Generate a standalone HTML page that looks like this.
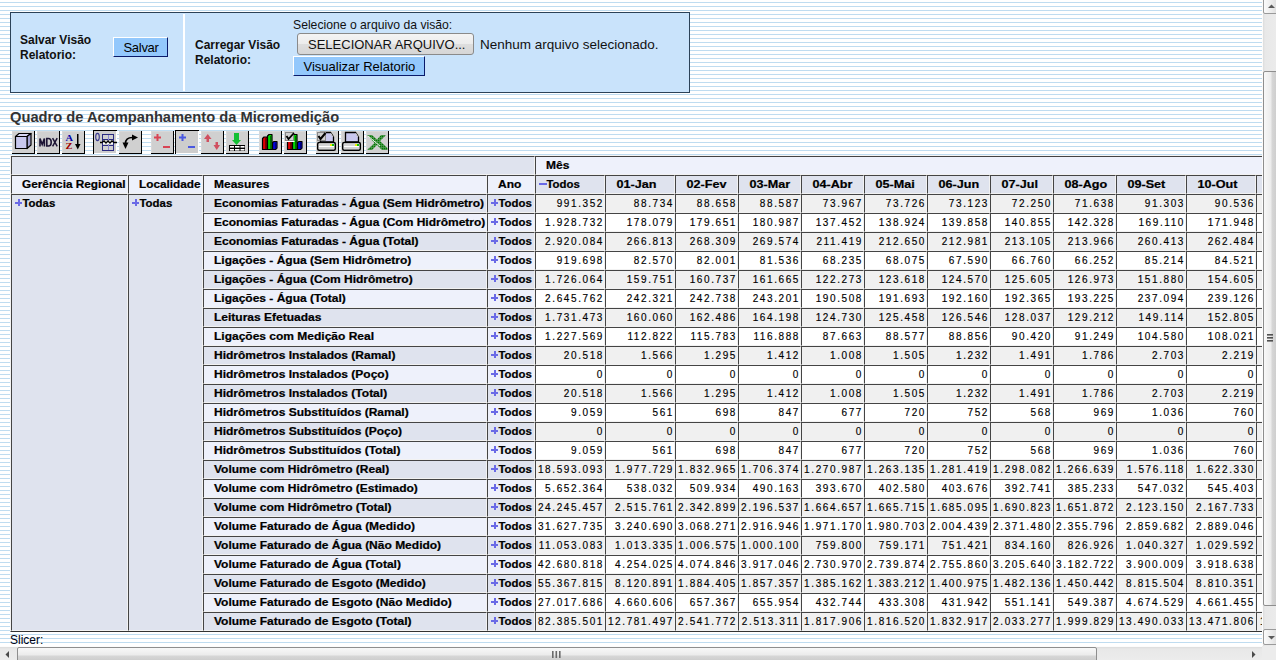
<!DOCTYPE html>
<html><head><meta charset="utf-8"><style>
html,body{margin:0;padding:0;}
body{width:1276px;height:660px;overflow:hidden;position:relative;font-family:"Liberation Sans",sans-serif;
background:#fff;}
#vp{position:absolute;left:0;top:0;width:1262px;height:646px;overflow:hidden;
background:repeating-linear-gradient(to bottom,#fff 0,#fff 2px,#bfdcf0 2px,#bfdcf0 3px,#fff 3px,#fff 4px);}
.c{position:absolute;border-top:1px solid #444;border-left:1px solid #444;border-right:1px solid #f2f2f2;border-bottom:1px solid #f2f2f2;overflow:hidden;white-space:nowrap;}
.c .t{position:absolute;left:10px;top:2px;font-size:10px;line-height:14px;color:#000;transform:scaleX(1.2);transform-origin:0 0;-webkit-text-stroke:0.2px #000;}
.c .n{position:absolute;right:0px;top:2px;font-size:10px;line-height:14px;letter-spacing:1.6px;color:#000;-webkit-text-stroke:0.15px #000;}
.c .s{transform:translateX(0.5px) scaleX(1.14);}
.c .g{transform:scaleX(1.18);}
.c .m{transform:translateX(0.5px) scaleX(1.26);}
.pl{position:absolute;left:3px;top:4px;width:7px;height:7px;}
.pl:before{content:"";position:absolute;left:0;top:2.5px;width:7px;height:2px;background:#6a6ae6;}
.pl:after{content:"";position:absolute;left:2.5px;top:0;width:2px;height:7px;background:#6a6ae6;}
.mi{position:absolute;left:3px;top:6.5px;width:8px;height:2px;background:#6a6ae6;}
#tbl{position:absolute;left:10px;top:155px;width:1300px;height:477px;border-top:1px solid #f4f4f4;border-left:1px solid #f4f4f4;border-bottom:1px solid #333;box-sizing:border-box;}
#panel{position:absolute;left:10px;top:12px;width:678px;height:79px;border:1px solid #2c4258;background:#c9e3fb;}
.lbl{position:absolute;font-size:12px;font-weight:bold;line-height:15px;color:#111;}
.btn{position:absolute;background:#93c8fc;border-top:1px solid #fff;border-left:1px solid #fff;border-right:1px solid #0a1a6a;border-bottom:1px solid #0a1a6a;font-size:13px;color:#000;}
#title{position:absolute;left:10px;top:107px;font-size:14.7px;font-weight:bold;color:#333;line-height:20px;white-space:nowrap;}
.tb{position:absolute;top:131px;width:22px;height:22px;background:#d4d4d4;border-right:1px solid #000;border-bottom:1px solid #000;}
.tbp{position:absolute;top:130px;width:23px;height:23px;background:#d0d0d0;border-left:1px solid #000;border-top:1px solid #000;border-right:1px solid #fff;border-bottom:1px solid #fff;}
#slicer{position:absolute;left:10px;top:633px;font-size:12px;line-height:14px;color:#001;}
#vsb{position:absolute;left:1262px;top:0;width:17px;height:646px;background:linear-gradient(to right,#fcfcfc 0,#fcfcfc 1px,#dcdcdc 1px,#e8e8e8 3px,#ececec);overflow:hidden;}
#vup{position:absolute;left:1px;top:-2px;width:15px;height:14px;border:1px solid #9a9a9a;border-radius:2px;background:linear-gradient(to right,#fbfbfb,#ececec 50%,#d8d8d8);}
#vdown{position:absolute;left:1px;top:629px;width:15px;height:14px;border:1px solid #9a9a9a;border-radius:2px;background:linear-gradient(to right,#fbfbfb,#ececec 50%,#d8d8d8);}
#vthumb{position:absolute;left:1px;top:71px;width:15px;height:533px;border:1px solid #8e8e8e;border-radius:2px;background:linear-gradient(to right,#f8f8f8,#ececec 45%,#d6d6d6 55%,#c8c8c8);}
#hsb{position:absolute;left:0;top:646px;width:1262px;height:14px;background:linear-gradient(to bottom,#fcfcfc 0,#fcfcfc 1px,#dcdcdc 1px,#e8e8e8 3px,#ececec);overflow:hidden;}
#hthumb{position:absolute;left:17px;top:1px;width:1078px;height:15px;border:1px solid #8e8e8e;border-radius:2px;background:linear-gradient(to bottom,#f8f8f8,#ececec 45%,#d6d6d6 55%,#c8c8c8);}
#corner{position:absolute;left:1262px;top:646px;width:14px;height:14px;background:#ececec;}
</style></head><body>
<div id="vp">
<div id="panel"></div>
<div style="position:absolute;left:183px;top:14px;width:2px;height:77px;background:#fff"></div>
<div class="lbl" style="left:20px;top:33px">Salvar Visão<br>Relatorio:</div>
<div class="btn" style="left:113px;top:37px;width:53px;height:18px;"><span style="position:absolute;left:9.5px;top:1.5px;line-height:16px;letter-spacing:-0.3px">Salvar</span></div>
<div class="lbl" style="left:195px;top:38px">Carregar Visão<br>Relatorio:</div>
<div style="position:absolute;left:293px;top:18px;font-size:12.2px;line-height:15px;color:#111;white-space:nowrap">Selecione o arquivo da visão:</div>
<div id="fbtn" style="position:absolute;left:297px;top:33px;width:175px;height:20px;border:1px solid #8a8a8a;border-radius:3px;background:linear-gradient(#f4f4f4 0%,#ececec 50%,#dedede 51%,#d6d6d6 100%);font-size:13px;color:#111;white-space:nowrap"><span style="position:absolute;left:10px;top:3px;line-height:16px">SELECIONAR ARQUIVO...</span></div>
<div style="position:absolute;left:480px;top:37px;font-size:13.5px;line-height:16px;color:#111;white-space:nowrap">Nenhum arquivo selecionado.</div>
<div class="btn" style="left:293px;top:56px;width:130px;height:18px;white-space:nowrap"><span style="position:absolute;left:9.5px;top:2px;line-height:16px">Visualizar Relatorio</span></div>
<div id="title">Quadro de Acompanhamento da Micromedição</div>
<div id="tbl"></div>
<svg style="position:absolute;left:0;top:0" width="400" height="160"><rect x="12" y="131" width="22" height="22" fill="#d0d0d0"/><rect x="12" y="131" width="22" height="1" fill="#d8d8d8"/><rect x="12" y="131" width="1" height="22" fill="#d8d8d8"/><rect x="34" y="131" width="1" height="23" fill="#000"/><rect x="12" y="153" width="23" height="1" fill="#000"/><rect x="37" y="131" width="22" height="22" fill="#d0d0d0"/><rect x="37" y="131" width="22" height="1" fill="#d8d8d8"/><rect x="37" y="131" width="1" height="22" fill="#d8d8d8"/><rect x="59" y="131" width="1" height="23" fill="#000"/><rect x="37" y="153" width="23" height="1" fill="#000"/><rect x="62" y="131" width="22" height="22" fill="#d0d0d0"/><rect x="62" y="131" width="22" height="1" fill="#d8d8d8"/><rect x="62" y="131" width="1" height="22" fill="#d8d8d8"/><rect x="84" y="131" width="1" height="23" fill="#000"/><rect x="62" y="153" width="23" height="1" fill="#000"/><rect x="119" y="131" width="22" height="22" fill="#d0d0d0"/><rect x="119" y="131" width="22" height="1" fill="#d8d8d8"/><rect x="119" y="131" width="1" height="22" fill="#d8d8d8"/><rect x="141" y="131" width="1" height="23" fill="#000"/><rect x="119" y="153" width="23" height="1" fill="#000"/><rect x="151" y="131" width="22" height="22" fill="#d0d0d0"/><rect x="151" y="131" width="22" height="1" fill="#d8d8d8"/><rect x="151" y="131" width="1" height="22" fill="#d8d8d8"/><rect x="173" y="131" width="1" height="23" fill="#000"/><rect x="151" y="153" width="23" height="1" fill="#000"/><rect x="201" y="131" width="22" height="22" fill="#d0d0d0"/><rect x="201" y="131" width="22" height="1" fill="#d8d8d8"/><rect x="201" y="131" width="1" height="22" fill="#d8d8d8"/><rect x="223" y="131" width="1" height="23" fill="#000"/><rect x="201" y="153" width="23" height="1" fill="#000"/><rect x="226" y="131" width="22" height="22" fill="#d0d0d0"/><rect x="226" y="131" width="22" height="1" fill="#d8d8d8"/><rect x="226" y="131" width="1" height="22" fill="#d8d8d8"/><rect x="248" y="131" width="1" height="23" fill="#000"/><rect x="226" y="153" width="23" height="1" fill="#000"/><rect x="259" y="131" width="22" height="22" fill="#d0d0d0"/><rect x="259" y="131" width="22" height="1" fill="#d8d8d8"/><rect x="259" y="131" width="1" height="22" fill="#d8d8d8"/><rect x="281" y="131" width="1" height="23" fill="#000"/><rect x="259" y="153" width="23" height="1" fill="#000"/><rect x="284" y="131" width="22" height="22" fill="#d0d0d0"/><rect x="284" y="131" width="22" height="1" fill="#d8d8d8"/><rect x="284" y="131" width="1" height="22" fill="#d8d8d8"/><rect x="306" y="131" width="1" height="23" fill="#000"/><rect x="284" y="153" width="23" height="1" fill="#000"/><rect x="316" y="131" width="22" height="22" fill="#d0d0d0"/><rect x="316" y="131" width="22" height="1" fill="#d8d8d8"/><rect x="316" y="131" width="1" height="22" fill="#d8d8d8"/><rect x="338" y="131" width="1" height="23" fill="#000"/><rect x="316" y="153" width="23" height="1" fill="#000"/><rect x="341" y="131" width="22" height="22" fill="#d0d0d0"/><rect x="341" y="131" width="22" height="1" fill="#d8d8d8"/><rect x="341" y="131" width="1" height="22" fill="#d8d8d8"/><rect x="363" y="131" width="1" height="23" fill="#000"/><rect x="341" y="153" width="23" height="1" fill="#000"/><rect x="366" y="131" width="22" height="22" fill="#d0d0d0"/><rect x="366" y="131" width="22" height="1" fill="#d8d8d8"/><rect x="366" y="131" width="1" height="22" fill="#d8d8d8"/><rect x="388" y="131" width="1" height="23" fill="#000"/><rect x="366" y="153" width="23" height="1" fill="#000"/><rect x="93" y="130" width="24" height="24" fill="#fff"/><rect x="94" y="131" width="22" height="22" fill="#cdcdcd"/><rect x="93" y="130" width="24" height="1" fill="#000"/><rect x="93" y="130" width="1" height="24" fill="#000"/><rect x="175" y="130" width="24" height="24" fill="#fff"/><rect x="176" y="131" width="22" height="22" fill="#cdcdcd"/><rect x="175" y="130" width="24" height="1" fill="#000"/><rect x="175" y="130" width="1" height="24" fill="#000"/><g stroke="#000" stroke-width="1.2" stroke-linejoin="round"><polygon points="15.5,136.5 19,133.5 31,133.5 27,136.5" fill="#d8d8f4"/><polygon points="27,136.5 31,133.5 31,145 27,148.5" fill="#a4a4d4"/><rect x="15.5" y="136.5" width="11.5" height="12" fill="#c8c8ee"/></g><g fill="none" stroke="#1c1434" stroke-width="1.6"><path d="M40,146.5 L40,138.5 L42.2,144.5 L44.4,138.5 L44.4,146.5"/><path d="M46.8,138.5 L46.8,146 L48.4,146 Q51.2,146 51.2,142.25 Q51.2,138.5 48.4,138.5 Z"/><path d="M52.6,138.2 L57.2,146.3 M57.2,138.2 L52.6,146.3" stroke-width="1.5"/></g><text x="65.5" y="141" font-family="Liberation Serif" font-weight="bold" font-size="9" fill="#0000a8" textLength="7.5" lengthAdjust="spacingAndGlyphs">A</text><text x="65.5" y="149" font-family="Liberation Serif" font-weight="bold" font-size="9" fill="#a00000" textLength="7" lengthAdjust="spacingAndGlyphs">Z</text><rect x="77" y="134" width="1.5" height="11" fill="#000"/><polygon points="75,144 80.5,144 77.75,149.5" fill="#000"/><ellipse cx="97.5" cy="137" rx="1.8" ry="3.6" fill="none" stroke="#3a3a90" stroke-width="1.1"/><rect x="102.5" y="134.5" width="11" height="16" fill="#d0d0d0" stroke="#2a2a80" stroke-width="1"/><rect x="103" y="139" width="10" height="1" fill="#2a2a80"/><rect x="103" y="145" width="10" height="1" fill="#2a2a80"/><rect x="108" y="135" width="1" height="15" fill="#8a8ad0"/><rect x="103" y="141" width="10" height="3" fill="#fff"/><polyline points="100,142.5 102,142.5 104,141 106,143 108,141 110,143 112,141 114,142.5 117,142.5" fill="none" stroke="#000" stroke-width="1.4"/><path d="M125.5,145 L125.5,143.5 Q125.5,137.5 132.5,137.5" fill="none" stroke="#000" stroke-width="1.6"/><polygon points="122.5,142.5 128.5,142.5 125.5,149" fill="#000"/><polygon points="132,134.5 132,140.5 138,137.5" fill="#000"/><rect x="154.0" y="136.5" width="7" height="2" fill="#d84454"/><rect x="156.5" y="134" width="2" height="7" fill="#d84454"/><rect x="163.0" y="146" width="7" height="2" fill="#d84454"/><rect x="179.0" y="136.5" width="7" height="2" fill="#4a58e0"/><rect x="181.5" y="134" width="2" height="7" fill="#4a58e0"/><rect x="188.0" y="146" width="7" height="2" fill="#4a58e0"/><g fill="#d05060"><rect x="206.5" y="137" width="2.5" height="5"/><polygon points="204,139 211.5,139 207.75,134"/><rect x="215.5" y="142" width="2.5" height="4.5"/><polygon points="213.5,145 220,145 216.75,150"/></g><g fill="#14c034"><rect x="234" y="133" width="5" height="7.5"/><polygon points="232,140 241,140 236.5,145"/></g><rect x="229" y="145" width="16" height="6" fill="#000"/><rect x="230" y="146" width="4" height="1.6" fill="#fff"/><rect x="235" y="146" width="4.5" height="1.6" fill="#fff"/><rect x="240.5" y="146" width="4" height="1.6" fill="#fff"/><rect x="230" y="149" width="4" height="1.6" fill="#fff"/><rect x="235" y="149" width="4.5" height="1.6" fill="#fff"/><rect x="240.5" y="149" width="4" height="1.6" fill="#fff"/><g stroke="#000" stroke-width="1.2" stroke-linejoin="round"><path d="M262.5,138.5 L264,137 L267,137 L267,149.5 L262.5,149.5Z" fill="#e00000"/><path d="M267.5,136 L269,134.5 L272,134.5 L272,149.5 L267.5,149.5Z" fill="#00d800"/><path d="M272.5,142.5 L274,141.5 L277,141.5 L277,148 L275.5,149.5 L272.5,149.5Z" fill="#0000d8"/></g><rect x="265" y="138" width="1.5" height="11" fill="#800000"/><rect x="270" y="136" width="1.5" height="13" fill="#007000"/><rect x="275" y="142.5" width="1.5" height="6" fill="#000080"/><g stroke="#000" stroke-width="1.2" stroke-linejoin="round"><path d="M287.5,138.5 L289,137 L292,137 L292,149.5 L287.5,149.5Z" fill="#e00000"/><path d="M292.5,136 L294,134.5 L297,134.5 L297,149.5 L292.5,149.5Z" fill="#00d800"/><path d="M297.5,142.5 L299,141.5 L302,141.5 L302,148 L300.5,149.5 L297.5,149.5Z" fill="#0000d8"/></g><rect x="290" y="138" width="1.5" height="11" fill="#800000"/><rect x="295" y="136" width="1.5" height="13" fill="#007000"/><rect x="300" y="142.5" width="1.5" height="6" fill="#000080"/><rect x="285" y="132" width="9" height="9" fill="#888"/><rect x="286" y="133" width="7" height="7" fill="#d0d0d0"/><rect x="284.5" y="141" width="10" height="1" fill="#fff"/><polyline points="286.5,136 288.5,139 294,133" fill="none" stroke="#000" stroke-width="1.8"/><path d="M320.5,132.5 L330.5,132.5 L333.5,137 L333.5,142 L320.5,142Z" fill="#c8c8ee" stroke="#000" stroke-width="1.3"/><line x1="330.5" y1="133" x2="333" y2="137" stroke="#fff" stroke-width="0.8"/><rect x="317.7" y="142.5" width="17.6" height="7.8" rx="1.5" fill="#fff" stroke="#000" stroke-width="1.5"/><rect x="319" y="144.5" width="11" height="1" fill="#a8a8a8"/><rect x="319" y="147.5" width="15" height="1" fill="#a8a8a8"/><rect x="330" y="144" width="2" height="2" fill="#f0f000"/><rect x="332" y="144" width="2" height="2" fill="#10c010"/><rect x="317" y="132" width="9" height="9" fill="#8a8a8a"/><rect x="318" y="133" width="7" height="7" fill="#d0d0d0"/><polyline points="318.5,136 320.5,139 325.5,133" fill="none" stroke="#000" stroke-width="2"/><path d="M345.5,132.5 L355.5,132.5 L358.5,137 L358.5,142 L345.5,142Z" fill="#c8c8ee" stroke="#000" stroke-width="1.3"/><line x1="355.5" y1="133" x2="358" y2="137" stroke="#fff" stroke-width="0.8"/><rect x="342.7" y="142.5" width="17.6" height="7.8" rx="1.5" fill="#fff" stroke="#000" stroke-width="1.5"/><rect x="344" y="144.5" width="11" height="1" fill="#a8a8a8"/><rect x="344" y="147.5" width="15" height="1" fill="#a8a8a8"/><rect x="355" y="144" width="2" height="2" fill="#f0f000"/><rect x="357" y="144" width="2" height="2" fill="#10c010"/><defs><pattern id="dots" width="2" height="2" patternUnits="userSpaceOnUse"><rect width="2" height="2" fill="#5a9a5a"/><rect x="0" y="0" width="1.3" height="1.3" fill="#007a00"/></pattern></defs><path d="M367,135 L372,135 L377,139.5 L381,135 L386,135 L380,141 L387.5,148 L387.5,150 L382,150 L377,145 L372,150 L367,150 L374.5,143 Z" fill="url(#dots)"/><line x1="368" y1="136" x2="380" y2="146" stroke="#fff" stroke-width="0.9"/></svg>
<div class="c " style="left:11px;top:156px;width:522px;height:17px;background:#dfe3ee"></div>
<div class="c h" style="left:535px;top:156px;width:863px;height:17px;background:#eef1fb"><b class="t">Mês</b></div>
<div class="c h" style="left:11px;top:175px;width:115px;height:17px;background:#eef1fb"><b class="t g">Gerência Regional</b></div>
<div class="c h" style="left:128px;top:175px;width:73px;height:17px;background:#eef1fb"><b class="t g">Localidade</b></div>
<div class="c h" style="left:203px;top:175px;width:282px;height:17px;background:#eef1fb"><b class="t">Measures</b></div>
<div class="c h" style="left:487px;top:175px;width:46px;height:17px;background:#eef1fb"><b class="t">Ano</b></div>
<div class="c h" style="left:535px;top:175px;width:68px;height:17px;background:#dfe3ee"><i class="mi"></i><b class="t s">Todos</b></div>
<div class="c h" style="left:605px;top:175px;width:68px;height:17px;background:#dfe3ee"><b class="t m">01-Jan</b></div>
<div class="c h" style="left:675px;top:175px;width:61px;height:17px;background:#dfe3ee"><b class="t m">02-Fev</b></div>
<div class="c h" style="left:738px;top:175px;width:61px;height:17px;background:#dfe3ee"><b class="t m">03-Mar</b></div>
<div class="c h" style="left:801px;top:175px;width:61px;height:17px;background:#dfe3ee"><b class="t m">04-Abr</b></div>
<div class="c h" style="left:864px;top:175px;width:61px;height:17px;background:#dfe3ee"><b class="t m">05-Mai</b></div>
<div class="c h" style="left:927px;top:175px;width:61px;height:17px;background:#dfe3ee"><b class="t m">06-Jun</b></div>
<div class="c h" style="left:990px;top:175px;width:61px;height:17px;background:#dfe3ee"><b class="t m">07-Jul</b></div>
<div class="c h" style="left:1053px;top:175px;width:61px;height:17px;background:#dfe3ee"><b class="t m">08-Ago</b></div>
<div class="c h" style="left:1116px;top:175px;width:68px;height:17px;background:#dfe3ee"><b class="t m">09-Set</b></div>
<div class="c h" style="left:1186px;top:175px;width:68px;height:17px;background:#dfe3ee"><b class="t m">10-Out</b></div>
<div class="c h" style="left:1256px;top:175px;width:68px;height:17px;background:#dfe3ee"><b class="t m">11-Nov</b></div>
<div class="c h" style="left:11px;top:194px;width:115px;height:435px;background:#dfe3ee"><i class="pl"></i><b class="t s">Todas</b></div>
<div class="c h" style="left:128px;top:194px;width:73px;height:435px;background:#dfe3ee"><i class="pl"></i><b class="t s">Todas</b></div>
<div class="c h" style="left:203px;top:194px;width:282px;height:17px;background:#dfe3ee"><b class="t">Economias Faturadas - Água (Sem Hidrômetro)</b></div>
<div class="c h" style="left:487px;top:194px;width:46px;height:17px;background:#dfe3ee"><i class="pl"></i><b class="t s">Todos</b></div>
<div class="c d" style="left:535px;top:194px;width:68px;height:17px;background:#f0f0f0"><span class="n">991.352</span></div>
<div class="c d" style="left:605px;top:194px;width:68px;height:17px;background:#f0f0f0"><span class="n">88.734</span></div>
<div class="c d" style="left:675px;top:194px;width:61px;height:17px;background:#f0f0f0"><span class="n">88.658</span></div>
<div class="c d" style="left:738px;top:194px;width:61px;height:17px;background:#f0f0f0"><span class="n">88.587</span></div>
<div class="c d" style="left:801px;top:194px;width:61px;height:17px;background:#f0f0f0"><span class="n">73.967</span></div>
<div class="c d" style="left:864px;top:194px;width:61px;height:17px;background:#f0f0f0"><span class="n">73.726</span></div>
<div class="c d" style="left:927px;top:194px;width:61px;height:17px;background:#f0f0f0"><span class="n">73.123</span></div>
<div class="c d" style="left:990px;top:194px;width:61px;height:17px;background:#f0f0f0"><span class="n">72.250</span></div>
<div class="c d" style="left:1053px;top:194px;width:61px;height:17px;background:#f0f0f0"><span class="n">71.638</span></div>
<div class="c d" style="left:1116px;top:194px;width:68px;height:17px;background:#f0f0f0"><span class="n">91.303</span></div>
<div class="c d" style="left:1186px;top:194px;width:68px;height:17px;background:#f0f0f0"><span class="n">90.536</span></div>
<div class="c d" style="left:1256px;top:194px;width:68px;height:17px;background:#f0f0f0"><span class="n" style="right:-1px">90.536</span></div>
<div class="c h" style="left:203px;top:213px;width:282px;height:17px;background:#eef1fb"><b class="t">Economias Faturadas - Água (Com Hidrômetro)</b></div>
<div class="c h" style="left:487px;top:213px;width:46px;height:17px;background:#eef1fb"><i class="pl"></i><b class="t s">Todos</b></div>
<div class="c d" style="left:535px;top:213px;width:68px;height:17px;background:#ffffff"><span class="n">1.928.732</span></div>
<div class="c d" style="left:605px;top:213px;width:68px;height:17px;background:#ffffff"><span class="n">178.079</span></div>
<div class="c d" style="left:675px;top:213px;width:61px;height:17px;background:#ffffff"><span class="n">179.651</span></div>
<div class="c d" style="left:738px;top:213px;width:61px;height:17px;background:#ffffff"><span class="n">180.987</span></div>
<div class="c d" style="left:801px;top:213px;width:61px;height:17px;background:#ffffff"><span class="n">137.452</span></div>
<div class="c d" style="left:864px;top:213px;width:61px;height:17px;background:#ffffff"><span class="n">138.924</span></div>
<div class="c d" style="left:927px;top:213px;width:61px;height:17px;background:#ffffff"><span class="n">139.858</span></div>
<div class="c d" style="left:990px;top:213px;width:61px;height:17px;background:#ffffff"><span class="n">140.855</span></div>
<div class="c d" style="left:1053px;top:213px;width:61px;height:17px;background:#ffffff"><span class="n">142.328</span></div>
<div class="c d" style="left:1116px;top:213px;width:68px;height:17px;background:#ffffff"><span class="n">169.110</span></div>
<div class="c d" style="left:1186px;top:213px;width:68px;height:17px;background:#ffffff"><span class="n">171.948</span></div>
<div class="c d" style="left:1256px;top:213px;width:68px;height:17px;background:#ffffff"><span class="n" style="right:-1px">171.948</span></div>
<div class="c h" style="left:203px;top:232px;width:282px;height:17px;background:#dfe3ee"><b class="t">Economias Faturadas - Água (Total)</b></div>
<div class="c h" style="left:487px;top:232px;width:46px;height:17px;background:#dfe3ee"><i class="pl"></i><b class="t s">Todos</b></div>
<div class="c d" style="left:535px;top:232px;width:68px;height:17px;background:#f0f0f0"><span class="n">2.920.084</span></div>
<div class="c d" style="left:605px;top:232px;width:68px;height:17px;background:#f0f0f0"><span class="n">266.813</span></div>
<div class="c d" style="left:675px;top:232px;width:61px;height:17px;background:#f0f0f0"><span class="n">268.309</span></div>
<div class="c d" style="left:738px;top:232px;width:61px;height:17px;background:#f0f0f0"><span class="n">269.574</span></div>
<div class="c d" style="left:801px;top:232px;width:61px;height:17px;background:#f0f0f0"><span class="n">211.419</span></div>
<div class="c d" style="left:864px;top:232px;width:61px;height:17px;background:#f0f0f0"><span class="n">212.650</span></div>
<div class="c d" style="left:927px;top:232px;width:61px;height:17px;background:#f0f0f0"><span class="n">212.981</span></div>
<div class="c d" style="left:990px;top:232px;width:61px;height:17px;background:#f0f0f0"><span class="n">213.105</span></div>
<div class="c d" style="left:1053px;top:232px;width:61px;height:17px;background:#f0f0f0"><span class="n">213.966</span></div>
<div class="c d" style="left:1116px;top:232px;width:68px;height:17px;background:#f0f0f0"><span class="n">260.413</span></div>
<div class="c d" style="left:1186px;top:232px;width:68px;height:17px;background:#f0f0f0"><span class="n">262.484</span></div>
<div class="c d" style="left:1256px;top:232px;width:68px;height:17px;background:#f0f0f0"><span class="n" style="right:-1px">262.484</span></div>
<div class="c h" style="left:203px;top:251px;width:282px;height:17px;background:#eef1fb"><b class="t">Ligações - Água (Sem Hidrômetro)</b></div>
<div class="c h" style="left:487px;top:251px;width:46px;height:17px;background:#eef1fb"><i class="pl"></i><b class="t s">Todos</b></div>
<div class="c d" style="left:535px;top:251px;width:68px;height:17px;background:#ffffff"><span class="n">919.698</span></div>
<div class="c d" style="left:605px;top:251px;width:68px;height:17px;background:#ffffff"><span class="n">82.570</span></div>
<div class="c d" style="left:675px;top:251px;width:61px;height:17px;background:#ffffff"><span class="n">82.001</span></div>
<div class="c d" style="left:738px;top:251px;width:61px;height:17px;background:#ffffff"><span class="n">81.536</span></div>
<div class="c d" style="left:801px;top:251px;width:61px;height:17px;background:#ffffff"><span class="n">68.235</span></div>
<div class="c d" style="left:864px;top:251px;width:61px;height:17px;background:#ffffff"><span class="n">68.075</span></div>
<div class="c d" style="left:927px;top:251px;width:61px;height:17px;background:#ffffff"><span class="n">67.590</span></div>
<div class="c d" style="left:990px;top:251px;width:61px;height:17px;background:#ffffff"><span class="n">66.760</span></div>
<div class="c d" style="left:1053px;top:251px;width:61px;height:17px;background:#ffffff"><span class="n">66.252</span></div>
<div class="c d" style="left:1116px;top:251px;width:68px;height:17px;background:#ffffff"><span class="n">85.214</span></div>
<div class="c d" style="left:1186px;top:251px;width:68px;height:17px;background:#ffffff"><span class="n">84.521</span></div>
<div class="c d" style="left:1256px;top:251px;width:68px;height:17px;background:#ffffff"><span class="n" style="right:-1px">84.521</span></div>
<div class="c h" style="left:203px;top:270px;width:282px;height:17px;background:#dfe3ee"><b class="t">Ligações - Água (Com Hidrômetro)</b></div>
<div class="c h" style="left:487px;top:270px;width:46px;height:17px;background:#dfe3ee"><i class="pl"></i><b class="t s">Todos</b></div>
<div class="c d" style="left:535px;top:270px;width:68px;height:17px;background:#f0f0f0"><span class="n">1.726.064</span></div>
<div class="c d" style="left:605px;top:270px;width:68px;height:17px;background:#f0f0f0"><span class="n">159.751</span></div>
<div class="c d" style="left:675px;top:270px;width:61px;height:17px;background:#f0f0f0"><span class="n">160.737</span></div>
<div class="c d" style="left:738px;top:270px;width:61px;height:17px;background:#f0f0f0"><span class="n">161.665</span></div>
<div class="c d" style="left:801px;top:270px;width:61px;height:17px;background:#f0f0f0"><span class="n">122.273</span></div>
<div class="c d" style="left:864px;top:270px;width:61px;height:17px;background:#f0f0f0"><span class="n">123.618</span></div>
<div class="c d" style="left:927px;top:270px;width:61px;height:17px;background:#f0f0f0"><span class="n">124.570</span></div>
<div class="c d" style="left:990px;top:270px;width:61px;height:17px;background:#f0f0f0"><span class="n">125.605</span></div>
<div class="c d" style="left:1053px;top:270px;width:61px;height:17px;background:#f0f0f0"><span class="n">126.973</span></div>
<div class="c d" style="left:1116px;top:270px;width:68px;height:17px;background:#f0f0f0"><span class="n">151.880</span></div>
<div class="c d" style="left:1186px;top:270px;width:68px;height:17px;background:#f0f0f0"><span class="n">154.605</span></div>
<div class="c d" style="left:1256px;top:270px;width:68px;height:17px;background:#f0f0f0"><span class="n" style="right:-1px">154.605</span></div>
<div class="c h" style="left:203px;top:289px;width:282px;height:17px;background:#eef1fb"><b class="t">Ligações - Água (Total)</b></div>
<div class="c h" style="left:487px;top:289px;width:46px;height:17px;background:#eef1fb"><i class="pl"></i><b class="t s">Todos</b></div>
<div class="c d" style="left:535px;top:289px;width:68px;height:17px;background:#ffffff"><span class="n">2.645.762</span></div>
<div class="c d" style="left:605px;top:289px;width:68px;height:17px;background:#ffffff"><span class="n">242.321</span></div>
<div class="c d" style="left:675px;top:289px;width:61px;height:17px;background:#ffffff"><span class="n">242.738</span></div>
<div class="c d" style="left:738px;top:289px;width:61px;height:17px;background:#ffffff"><span class="n">243.201</span></div>
<div class="c d" style="left:801px;top:289px;width:61px;height:17px;background:#ffffff"><span class="n">190.508</span></div>
<div class="c d" style="left:864px;top:289px;width:61px;height:17px;background:#ffffff"><span class="n">191.693</span></div>
<div class="c d" style="left:927px;top:289px;width:61px;height:17px;background:#ffffff"><span class="n">192.160</span></div>
<div class="c d" style="left:990px;top:289px;width:61px;height:17px;background:#ffffff"><span class="n">192.365</span></div>
<div class="c d" style="left:1053px;top:289px;width:61px;height:17px;background:#ffffff"><span class="n">193.225</span></div>
<div class="c d" style="left:1116px;top:289px;width:68px;height:17px;background:#ffffff"><span class="n">237.094</span></div>
<div class="c d" style="left:1186px;top:289px;width:68px;height:17px;background:#ffffff"><span class="n">239.126</span></div>
<div class="c d" style="left:1256px;top:289px;width:68px;height:17px;background:#ffffff"><span class="n" style="right:-1px">239.126</span></div>
<div class="c h" style="left:203px;top:308px;width:282px;height:17px;background:#dfe3ee"><b class="t">Leituras Efetuadas</b></div>
<div class="c h" style="left:487px;top:308px;width:46px;height:17px;background:#dfe3ee"><i class="pl"></i><b class="t s">Todos</b></div>
<div class="c d" style="left:535px;top:308px;width:68px;height:17px;background:#f0f0f0"><span class="n">1.731.473</span></div>
<div class="c d" style="left:605px;top:308px;width:68px;height:17px;background:#f0f0f0"><span class="n">160.060</span></div>
<div class="c d" style="left:675px;top:308px;width:61px;height:17px;background:#f0f0f0"><span class="n">162.486</span></div>
<div class="c d" style="left:738px;top:308px;width:61px;height:17px;background:#f0f0f0"><span class="n">164.198</span></div>
<div class="c d" style="left:801px;top:308px;width:61px;height:17px;background:#f0f0f0"><span class="n">124.730</span></div>
<div class="c d" style="left:864px;top:308px;width:61px;height:17px;background:#f0f0f0"><span class="n">125.458</span></div>
<div class="c d" style="left:927px;top:308px;width:61px;height:17px;background:#f0f0f0"><span class="n">126.546</span></div>
<div class="c d" style="left:990px;top:308px;width:61px;height:17px;background:#f0f0f0"><span class="n">128.037</span></div>
<div class="c d" style="left:1053px;top:308px;width:61px;height:17px;background:#f0f0f0"><span class="n">129.212</span></div>
<div class="c d" style="left:1116px;top:308px;width:68px;height:17px;background:#f0f0f0"><span class="n">149.114</span></div>
<div class="c d" style="left:1186px;top:308px;width:68px;height:17px;background:#f0f0f0"><span class="n">152.805</span></div>
<div class="c d" style="left:1256px;top:308px;width:68px;height:17px;background:#f0f0f0"><span class="n" style="right:-1px">152.805</span></div>
<div class="c h" style="left:203px;top:327px;width:282px;height:17px;background:#eef1fb"><b class="t">Ligações com Medição Real</b></div>
<div class="c h" style="left:487px;top:327px;width:46px;height:17px;background:#eef1fb"><i class="pl"></i><b class="t s">Todos</b></div>
<div class="c d" style="left:535px;top:327px;width:68px;height:17px;background:#ffffff"><span class="n">1.227.569</span></div>
<div class="c d" style="left:605px;top:327px;width:68px;height:17px;background:#ffffff"><span class="n">112.822</span></div>
<div class="c d" style="left:675px;top:327px;width:61px;height:17px;background:#ffffff"><span class="n">115.783</span></div>
<div class="c d" style="left:738px;top:327px;width:61px;height:17px;background:#ffffff"><span class="n">116.888</span></div>
<div class="c d" style="left:801px;top:327px;width:61px;height:17px;background:#ffffff"><span class="n">87.663</span></div>
<div class="c d" style="left:864px;top:327px;width:61px;height:17px;background:#ffffff"><span class="n">88.577</span></div>
<div class="c d" style="left:927px;top:327px;width:61px;height:17px;background:#ffffff"><span class="n">88.856</span></div>
<div class="c d" style="left:990px;top:327px;width:61px;height:17px;background:#ffffff"><span class="n">90.420</span></div>
<div class="c d" style="left:1053px;top:327px;width:61px;height:17px;background:#ffffff"><span class="n">91.249</span></div>
<div class="c d" style="left:1116px;top:327px;width:68px;height:17px;background:#ffffff"><span class="n">104.580</span></div>
<div class="c d" style="left:1186px;top:327px;width:68px;height:17px;background:#ffffff"><span class="n">108.021</span></div>
<div class="c d" style="left:1256px;top:327px;width:68px;height:17px;background:#ffffff"><span class="n" style="right:-1px">108.021</span></div>
<div class="c h" style="left:203px;top:346px;width:282px;height:17px;background:#dfe3ee"><b class="t">Hidrômetros Instalados (Ramal)</b></div>
<div class="c h" style="left:487px;top:346px;width:46px;height:17px;background:#dfe3ee"><i class="pl"></i><b class="t s">Todos</b></div>
<div class="c d" style="left:535px;top:346px;width:68px;height:17px;background:#f0f0f0"><span class="n">20.518</span></div>
<div class="c d" style="left:605px;top:346px;width:68px;height:17px;background:#f0f0f0"><span class="n">1.566</span></div>
<div class="c d" style="left:675px;top:346px;width:61px;height:17px;background:#f0f0f0"><span class="n">1.295</span></div>
<div class="c d" style="left:738px;top:346px;width:61px;height:17px;background:#f0f0f0"><span class="n">1.412</span></div>
<div class="c d" style="left:801px;top:346px;width:61px;height:17px;background:#f0f0f0"><span class="n">1.008</span></div>
<div class="c d" style="left:864px;top:346px;width:61px;height:17px;background:#f0f0f0"><span class="n">1.505</span></div>
<div class="c d" style="left:927px;top:346px;width:61px;height:17px;background:#f0f0f0"><span class="n">1.232</span></div>
<div class="c d" style="left:990px;top:346px;width:61px;height:17px;background:#f0f0f0"><span class="n">1.491</span></div>
<div class="c d" style="left:1053px;top:346px;width:61px;height:17px;background:#f0f0f0"><span class="n">1.786</span></div>
<div class="c d" style="left:1116px;top:346px;width:68px;height:17px;background:#f0f0f0"><span class="n">2.703</span></div>
<div class="c d" style="left:1186px;top:346px;width:68px;height:17px;background:#f0f0f0"><span class="n">2.219</span></div>
<div class="c d" style="left:1256px;top:346px;width:68px;height:17px;background:#f0f0f0"><span class="n" style="right:-1px">2.219</span></div>
<div class="c h" style="left:203px;top:365px;width:282px;height:17px;background:#eef1fb"><b class="t">Hidrômetros Instalados (Poço)</b></div>
<div class="c h" style="left:487px;top:365px;width:46px;height:17px;background:#eef1fb"><i class="pl"></i><b class="t s">Todos</b></div>
<div class="c d" style="left:535px;top:365px;width:68px;height:17px;background:#ffffff"><span class="n">0</span></div>
<div class="c d" style="left:605px;top:365px;width:68px;height:17px;background:#ffffff"><span class="n">0</span></div>
<div class="c d" style="left:675px;top:365px;width:61px;height:17px;background:#ffffff"><span class="n">0</span></div>
<div class="c d" style="left:738px;top:365px;width:61px;height:17px;background:#ffffff"><span class="n">0</span></div>
<div class="c d" style="left:801px;top:365px;width:61px;height:17px;background:#ffffff"><span class="n">0</span></div>
<div class="c d" style="left:864px;top:365px;width:61px;height:17px;background:#ffffff"><span class="n">0</span></div>
<div class="c d" style="left:927px;top:365px;width:61px;height:17px;background:#ffffff"><span class="n">0</span></div>
<div class="c d" style="left:990px;top:365px;width:61px;height:17px;background:#ffffff"><span class="n">0</span></div>
<div class="c d" style="left:1053px;top:365px;width:61px;height:17px;background:#ffffff"><span class="n">0</span></div>
<div class="c d" style="left:1116px;top:365px;width:68px;height:17px;background:#ffffff"><span class="n">0</span></div>
<div class="c d" style="left:1186px;top:365px;width:68px;height:17px;background:#ffffff"><span class="n">0</span></div>
<div class="c d" style="left:1256px;top:365px;width:68px;height:17px;background:#ffffff"><span class="n" style="right:-1px">0</span></div>
<div class="c h" style="left:203px;top:384px;width:282px;height:17px;background:#dfe3ee"><b class="t">Hidrômetros Instalados (Total)</b></div>
<div class="c h" style="left:487px;top:384px;width:46px;height:17px;background:#dfe3ee"><i class="pl"></i><b class="t s">Todos</b></div>
<div class="c d" style="left:535px;top:384px;width:68px;height:17px;background:#f0f0f0"><span class="n">20.518</span></div>
<div class="c d" style="left:605px;top:384px;width:68px;height:17px;background:#f0f0f0"><span class="n">1.566</span></div>
<div class="c d" style="left:675px;top:384px;width:61px;height:17px;background:#f0f0f0"><span class="n">1.295</span></div>
<div class="c d" style="left:738px;top:384px;width:61px;height:17px;background:#f0f0f0"><span class="n">1.412</span></div>
<div class="c d" style="left:801px;top:384px;width:61px;height:17px;background:#f0f0f0"><span class="n">1.008</span></div>
<div class="c d" style="left:864px;top:384px;width:61px;height:17px;background:#f0f0f0"><span class="n">1.505</span></div>
<div class="c d" style="left:927px;top:384px;width:61px;height:17px;background:#f0f0f0"><span class="n">1.232</span></div>
<div class="c d" style="left:990px;top:384px;width:61px;height:17px;background:#f0f0f0"><span class="n">1.491</span></div>
<div class="c d" style="left:1053px;top:384px;width:61px;height:17px;background:#f0f0f0"><span class="n">1.786</span></div>
<div class="c d" style="left:1116px;top:384px;width:68px;height:17px;background:#f0f0f0"><span class="n">2.703</span></div>
<div class="c d" style="left:1186px;top:384px;width:68px;height:17px;background:#f0f0f0"><span class="n">2.219</span></div>
<div class="c d" style="left:1256px;top:384px;width:68px;height:17px;background:#f0f0f0"><span class="n" style="right:-1px">2.219</span></div>
<div class="c h" style="left:203px;top:403px;width:282px;height:17px;background:#eef1fb"><b class="t">Hidrômetros Substituídos (Ramal)</b></div>
<div class="c h" style="left:487px;top:403px;width:46px;height:17px;background:#eef1fb"><i class="pl"></i><b class="t s">Todos</b></div>
<div class="c d" style="left:535px;top:403px;width:68px;height:17px;background:#ffffff"><span class="n">9.059</span></div>
<div class="c d" style="left:605px;top:403px;width:68px;height:17px;background:#ffffff"><span class="n">561</span></div>
<div class="c d" style="left:675px;top:403px;width:61px;height:17px;background:#ffffff"><span class="n">698</span></div>
<div class="c d" style="left:738px;top:403px;width:61px;height:17px;background:#ffffff"><span class="n">847</span></div>
<div class="c d" style="left:801px;top:403px;width:61px;height:17px;background:#ffffff"><span class="n">677</span></div>
<div class="c d" style="left:864px;top:403px;width:61px;height:17px;background:#ffffff"><span class="n">720</span></div>
<div class="c d" style="left:927px;top:403px;width:61px;height:17px;background:#ffffff"><span class="n">752</span></div>
<div class="c d" style="left:990px;top:403px;width:61px;height:17px;background:#ffffff"><span class="n">568</span></div>
<div class="c d" style="left:1053px;top:403px;width:61px;height:17px;background:#ffffff"><span class="n">969</span></div>
<div class="c d" style="left:1116px;top:403px;width:68px;height:17px;background:#ffffff"><span class="n">1.036</span></div>
<div class="c d" style="left:1186px;top:403px;width:68px;height:17px;background:#ffffff"><span class="n">760</span></div>
<div class="c d" style="left:1256px;top:403px;width:68px;height:17px;background:#ffffff"><span class="n" style="right:-1px">760</span></div>
<div class="c h" style="left:203px;top:422px;width:282px;height:17px;background:#dfe3ee"><b class="t">Hidrômetros Substituídos (Poço)</b></div>
<div class="c h" style="left:487px;top:422px;width:46px;height:17px;background:#dfe3ee"><i class="pl"></i><b class="t s">Todos</b></div>
<div class="c d" style="left:535px;top:422px;width:68px;height:17px;background:#f0f0f0"><span class="n">0</span></div>
<div class="c d" style="left:605px;top:422px;width:68px;height:17px;background:#f0f0f0"><span class="n">0</span></div>
<div class="c d" style="left:675px;top:422px;width:61px;height:17px;background:#f0f0f0"><span class="n">0</span></div>
<div class="c d" style="left:738px;top:422px;width:61px;height:17px;background:#f0f0f0"><span class="n">0</span></div>
<div class="c d" style="left:801px;top:422px;width:61px;height:17px;background:#f0f0f0"><span class="n">0</span></div>
<div class="c d" style="left:864px;top:422px;width:61px;height:17px;background:#f0f0f0"><span class="n">0</span></div>
<div class="c d" style="left:927px;top:422px;width:61px;height:17px;background:#f0f0f0"><span class="n">0</span></div>
<div class="c d" style="left:990px;top:422px;width:61px;height:17px;background:#f0f0f0"><span class="n">0</span></div>
<div class="c d" style="left:1053px;top:422px;width:61px;height:17px;background:#f0f0f0"><span class="n">0</span></div>
<div class="c d" style="left:1116px;top:422px;width:68px;height:17px;background:#f0f0f0"><span class="n">0</span></div>
<div class="c d" style="left:1186px;top:422px;width:68px;height:17px;background:#f0f0f0"><span class="n">0</span></div>
<div class="c d" style="left:1256px;top:422px;width:68px;height:17px;background:#f0f0f0"><span class="n" style="right:-1px">0</span></div>
<div class="c h" style="left:203px;top:441px;width:282px;height:17px;background:#eef1fb"><b class="t">Hidrômetros Substituídos (Total)</b></div>
<div class="c h" style="left:487px;top:441px;width:46px;height:17px;background:#eef1fb"><i class="pl"></i><b class="t s">Todos</b></div>
<div class="c d" style="left:535px;top:441px;width:68px;height:17px;background:#ffffff"><span class="n">9.059</span></div>
<div class="c d" style="left:605px;top:441px;width:68px;height:17px;background:#ffffff"><span class="n">561</span></div>
<div class="c d" style="left:675px;top:441px;width:61px;height:17px;background:#ffffff"><span class="n">698</span></div>
<div class="c d" style="left:738px;top:441px;width:61px;height:17px;background:#ffffff"><span class="n">847</span></div>
<div class="c d" style="left:801px;top:441px;width:61px;height:17px;background:#ffffff"><span class="n">677</span></div>
<div class="c d" style="left:864px;top:441px;width:61px;height:17px;background:#ffffff"><span class="n">720</span></div>
<div class="c d" style="left:927px;top:441px;width:61px;height:17px;background:#ffffff"><span class="n">752</span></div>
<div class="c d" style="left:990px;top:441px;width:61px;height:17px;background:#ffffff"><span class="n">568</span></div>
<div class="c d" style="left:1053px;top:441px;width:61px;height:17px;background:#ffffff"><span class="n">969</span></div>
<div class="c d" style="left:1116px;top:441px;width:68px;height:17px;background:#ffffff"><span class="n">1.036</span></div>
<div class="c d" style="left:1186px;top:441px;width:68px;height:17px;background:#ffffff"><span class="n">760</span></div>
<div class="c d" style="left:1256px;top:441px;width:68px;height:17px;background:#ffffff"><span class="n" style="right:-1px">760</span></div>
<div class="c h" style="left:203px;top:460px;width:282px;height:17px;background:#dfe3ee"><b class="t">Volume com Hidrômetro (Real)</b></div>
<div class="c h" style="left:487px;top:460px;width:46px;height:17px;background:#dfe3ee"><i class="pl"></i><b class="t s">Todos</b></div>
<div class="c d" style="left:535px;top:460px;width:68px;height:17px;background:#f0f0f0"><span class="n">18.593.093</span></div>
<div class="c d" style="left:605px;top:460px;width:68px;height:17px;background:#f0f0f0"><span class="n">1.977.729</span></div>
<div class="c d" style="left:675px;top:460px;width:61px;height:17px;background:#f0f0f0"><span class="n">1.832.965</span></div>
<div class="c d" style="left:738px;top:460px;width:61px;height:17px;background:#f0f0f0"><span class="n">1.706.374</span></div>
<div class="c d" style="left:801px;top:460px;width:61px;height:17px;background:#f0f0f0"><span class="n">1.270.987</span></div>
<div class="c d" style="left:864px;top:460px;width:61px;height:17px;background:#f0f0f0"><span class="n">1.263.135</span></div>
<div class="c d" style="left:927px;top:460px;width:61px;height:17px;background:#f0f0f0"><span class="n">1.281.419</span></div>
<div class="c d" style="left:990px;top:460px;width:61px;height:17px;background:#f0f0f0"><span class="n">1.298.082</span></div>
<div class="c d" style="left:1053px;top:460px;width:61px;height:17px;background:#f0f0f0"><span class="n">1.266.639</span></div>
<div class="c d" style="left:1116px;top:460px;width:68px;height:17px;background:#f0f0f0"><span class="n">1.576.118</span></div>
<div class="c d" style="left:1186px;top:460px;width:68px;height:17px;background:#f0f0f0"><span class="n">1.622.330</span></div>
<div class="c d" style="left:1256px;top:460px;width:68px;height:17px;background:#f0f0f0"><span class="n" style="right:-1px">1.622.330</span></div>
<div class="c h" style="left:203px;top:479px;width:282px;height:17px;background:#eef1fb"><b class="t">Volume com Hidrômetro (Estimado)</b></div>
<div class="c h" style="left:487px;top:479px;width:46px;height:17px;background:#eef1fb"><i class="pl"></i><b class="t s">Todos</b></div>
<div class="c d" style="left:535px;top:479px;width:68px;height:17px;background:#ffffff"><span class="n">5.652.364</span></div>
<div class="c d" style="left:605px;top:479px;width:68px;height:17px;background:#ffffff"><span class="n">538.032</span></div>
<div class="c d" style="left:675px;top:479px;width:61px;height:17px;background:#ffffff"><span class="n">509.934</span></div>
<div class="c d" style="left:738px;top:479px;width:61px;height:17px;background:#ffffff"><span class="n">490.163</span></div>
<div class="c d" style="left:801px;top:479px;width:61px;height:17px;background:#ffffff"><span class="n">393.670</span></div>
<div class="c d" style="left:864px;top:479px;width:61px;height:17px;background:#ffffff"><span class="n">402.580</span></div>
<div class="c d" style="left:927px;top:479px;width:61px;height:17px;background:#ffffff"><span class="n">403.676</span></div>
<div class="c d" style="left:990px;top:479px;width:61px;height:17px;background:#ffffff"><span class="n">392.741</span></div>
<div class="c d" style="left:1053px;top:479px;width:61px;height:17px;background:#ffffff"><span class="n">385.233</span></div>
<div class="c d" style="left:1116px;top:479px;width:68px;height:17px;background:#ffffff"><span class="n">547.032</span></div>
<div class="c d" style="left:1186px;top:479px;width:68px;height:17px;background:#ffffff"><span class="n">545.403</span></div>
<div class="c d" style="left:1256px;top:479px;width:68px;height:17px;background:#ffffff"><span class="n" style="right:-1px">545.403</span></div>
<div class="c h" style="left:203px;top:498px;width:282px;height:17px;background:#dfe3ee"><b class="t">Volume com Hidrômetro (Total)</b></div>
<div class="c h" style="left:487px;top:498px;width:46px;height:17px;background:#dfe3ee"><i class="pl"></i><b class="t s">Todos</b></div>
<div class="c d" style="left:535px;top:498px;width:68px;height:17px;background:#f0f0f0"><span class="n">24.245.457</span></div>
<div class="c d" style="left:605px;top:498px;width:68px;height:17px;background:#f0f0f0"><span class="n">2.515.761</span></div>
<div class="c d" style="left:675px;top:498px;width:61px;height:17px;background:#f0f0f0"><span class="n">2.342.899</span></div>
<div class="c d" style="left:738px;top:498px;width:61px;height:17px;background:#f0f0f0"><span class="n">2.196.537</span></div>
<div class="c d" style="left:801px;top:498px;width:61px;height:17px;background:#f0f0f0"><span class="n">1.664.657</span></div>
<div class="c d" style="left:864px;top:498px;width:61px;height:17px;background:#f0f0f0"><span class="n">1.665.715</span></div>
<div class="c d" style="left:927px;top:498px;width:61px;height:17px;background:#f0f0f0"><span class="n">1.685.095</span></div>
<div class="c d" style="left:990px;top:498px;width:61px;height:17px;background:#f0f0f0"><span class="n">1.690.823</span></div>
<div class="c d" style="left:1053px;top:498px;width:61px;height:17px;background:#f0f0f0"><span class="n">1.651.872</span></div>
<div class="c d" style="left:1116px;top:498px;width:68px;height:17px;background:#f0f0f0"><span class="n">2.123.150</span></div>
<div class="c d" style="left:1186px;top:498px;width:68px;height:17px;background:#f0f0f0"><span class="n">2.167.733</span></div>
<div class="c d" style="left:1256px;top:498px;width:68px;height:17px;background:#f0f0f0"><span class="n" style="right:-1px">2.167.733</span></div>
<div class="c h" style="left:203px;top:517px;width:282px;height:17px;background:#eef1fb"><b class="t">Volume Faturado de Água (Medido)</b></div>
<div class="c h" style="left:487px;top:517px;width:46px;height:17px;background:#eef1fb"><i class="pl"></i><b class="t s">Todos</b></div>
<div class="c d" style="left:535px;top:517px;width:68px;height:17px;background:#ffffff"><span class="n">31.627.735</span></div>
<div class="c d" style="left:605px;top:517px;width:68px;height:17px;background:#ffffff"><span class="n">3.240.690</span></div>
<div class="c d" style="left:675px;top:517px;width:61px;height:17px;background:#ffffff"><span class="n">3.068.271</span></div>
<div class="c d" style="left:738px;top:517px;width:61px;height:17px;background:#ffffff"><span class="n">2.916.946</span></div>
<div class="c d" style="left:801px;top:517px;width:61px;height:17px;background:#ffffff"><span class="n">1.971.170</span></div>
<div class="c d" style="left:864px;top:517px;width:61px;height:17px;background:#ffffff"><span class="n">1.980.703</span></div>
<div class="c d" style="left:927px;top:517px;width:61px;height:17px;background:#ffffff"><span class="n">2.004.439</span></div>
<div class="c d" style="left:990px;top:517px;width:61px;height:17px;background:#ffffff"><span class="n">2.371.480</span></div>
<div class="c d" style="left:1053px;top:517px;width:61px;height:17px;background:#ffffff"><span class="n">2.355.796</span></div>
<div class="c d" style="left:1116px;top:517px;width:68px;height:17px;background:#ffffff"><span class="n">2.859.682</span></div>
<div class="c d" style="left:1186px;top:517px;width:68px;height:17px;background:#ffffff"><span class="n">2.889.046</span></div>
<div class="c d" style="left:1256px;top:517px;width:68px;height:17px;background:#ffffff"><span class="n" style="right:-1px">2.889.046</span></div>
<div class="c h" style="left:203px;top:536px;width:282px;height:17px;background:#dfe3ee"><b class="t">Volume Faturado de Água (Não Medido)</b></div>
<div class="c h" style="left:487px;top:536px;width:46px;height:17px;background:#dfe3ee"><i class="pl"></i><b class="t s">Todos</b></div>
<div class="c d" style="left:535px;top:536px;width:68px;height:17px;background:#f0f0f0"><span class="n">11.053.083</span></div>
<div class="c d" style="left:605px;top:536px;width:68px;height:17px;background:#f0f0f0"><span class="n">1.013.335</span></div>
<div class="c d" style="left:675px;top:536px;width:61px;height:17px;background:#f0f0f0"><span class="n">1.006.575</span></div>
<div class="c d" style="left:738px;top:536px;width:61px;height:17px;background:#f0f0f0"><span class="n">1.000.100</span></div>
<div class="c d" style="left:801px;top:536px;width:61px;height:17px;background:#f0f0f0"><span class="n">759.800</span></div>
<div class="c d" style="left:864px;top:536px;width:61px;height:17px;background:#f0f0f0"><span class="n">759.171</span></div>
<div class="c d" style="left:927px;top:536px;width:61px;height:17px;background:#f0f0f0"><span class="n">751.421</span></div>
<div class="c d" style="left:990px;top:536px;width:61px;height:17px;background:#f0f0f0"><span class="n">834.160</span></div>
<div class="c d" style="left:1053px;top:536px;width:61px;height:17px;background:#f0f0f0"><span class="n">826.926</span></div>
<div class="c d" style="left:1116px;top:536px;width:68px;height:17px;background:#f0f0f0"><span class="n">1.040.327</span></div>
<div class="c d" style="left:1186px;top:536px;width:68px;height:17px;background:#f0f0f0"><span class="n">1.029.592</span></div>
<div class="c d" style="left:1256px;top:536px;width:68px;height:17px;background:#f0f0f0"><span class="n" style="right:-1px">1.029.592</span></div>
<div class="c h" style="left:203px;top:555px;width:282px;height:17px;background:#eef1fb"><b class="t">Volume Faturado de Água (Total)</b></div>
<div class="c h" style="left:487px;top:555px;width:46px;height:17px;background:#eef1fb"><i class="pl"></i><b class="t s">Todos</b></div>
<div class="c d" style="left:535px;top:555px;width:68px;height:17px;background:#ffffff"><span class="n">42.680.818</span></div>
<div class="c d" style="left:605px;top:555px;width:68px;height:17px;background:#ffffff"><span class="n">4.254.025</span></div>
<div class="c d" style="left:675px;top:555px;width:61px;height:17px;background:#ffffff"><span class="n">4.074.846</span></div>
<div class="c d" style="left:738px;top:555px;width:61px;height:17px;background:#ffffff"><span class="n">3.917.046</span></div>
<div class="c d" style="left:801px;top:555px;width:61px;height:17px;background:#ffffff"><span class="n">2.730.970</span></div>
<div class="c d" style="left:864px;top:555px;width:61px;height:17px;background:#ffffff"><span class="n">2.739.874</span></div>
<div class="c d" style="left:927px;top:555px;width:61px;height:17px;background:#ffffff"><span class="n">2.755.860</span></div>
<div class="c d" style="left:990px;top:555px;width:61px;height:17px;background:#ffffff"><span class="n">3.205.640</span></div>
<div class="c d" style="left:1053px;top:555px;width:61px;height:17px;background:#ffffff"><span class="n">3.182.722</span></div>
<div class="c d" style="left:1116px;top:555px;width:68px;height:17px;background:#ffffff"><span class="n">3.900.009</span></div>
<div class="c d" style="left:1186px;top:555px;width:68px;height:17px;background:#ffffff"><span class="n">3.918.638</span></div>
<div class="c d" style="left:1256px;top:555px;width:68px;height:17px;background:#ffffff"><span class="n" style="right:-1px">3.918.638</span></div>
<div class="c h" style="left:203px;top:574px;width:282px;height:17px;background:#dfe3ee"><b class="t">Volume Faturado de Esgoto (Medido)</b></div>
<div class="c h" style="left:487px;top:574px;width:46px;height:17px;background:#dfe3ee"><i class="pl"></i><b class="t s">Todos</b></div>
<div class="c d" style="left:535px;top:574px;width:68px;height:17px;background:#f0f0f0"><span class="n">55.367.815</span></div>
<div class="c d" style="left:605px;top:574px;width:68px;height:17px;background:#f0f0f0"><span class="n">8.120.891</span></div>
<div class="c d" style="left:675px;top:574px;width:61px;height:17px;background:#f0f0f0"><span class="n">1.884.405</span></div>
<div class="c d" style="left:738px;top:574px;width:61px;height:17px;background:#f0f0f0"><span class="n">1.857.357</span></div>
<div class="c d" style="left:801px;top:574px;width:61px;height:17px;background:#f0f0f0"><span class="n">1.385.162</span></div>
<div class="c d" style="left:864px;top:574px;width:61px;height:17px;background:#f0f0f0"><span class="n">1.383.212</span></div>
<div class="c d" style="left:927px;top:574px;width:61px;height:17px;background:#f0f0f0"><span class="n">1.400.975</span></div>
<div class="c d" style="left:990px;top:574px;width:61px;height:17px;background:#f0f0f0"><span class="n">1.482.136</span></div>
<div class="c d" style="left:1053px;top:574px;width:61px;height:17px;background:#f0f0f0"><span class="n">1.450.442</span></div>
<div class="c d" style="left:1116px;top:574px;width:68px;height:17px;background:#f0f0f0"><span class="n">8.815.504</span></div>
<div class="c d" style="left:1186px;top:574px;width:68px;height:17px;background:#f0f0f0"><span class="n">8.810.351</span></div>
<div class="c d" style="left:1256px;top:574px;width:68px;height:17px;background:#f0f0f0"><span class="n" style="right:-1px">8.810.351</span></div>
<div class="c h" style="left:203px;top:593px;width:282px;height:17px;background:#eef1fb"><b class="t">Volume Faturado de Esgoto (Não Medido)</b></div>
<div class="c h" style="left:487px;top:593px;width:46px;height:17px;background:#eef1fb"><i class="pl"></i><b class="t s">Todos</b></div>
<div class="c d" style="left:535px;top:593px;width:68px;height:17px;background:#ffffff"><span class="n">27.017.686</span></div>
<div class="c d" style="left:605px;top:593px;width:68px;height:17px;background:#ffffff"><span class="n">4.660.606</span></div>
<div class="c d" style="left:675px;top:593px;width:61px;height:17px;background:#ffffff"><span class="n">657.367</span></div>
<div class="c d" style="left:738px;top:593px;width:61px;height:17px;background:#ffffff"><span class="n">655.954</span></div>
<div class="c d" style="left:801px;top:593px;width:61px;height:17px;background:#ffffff"><span class="n">432.744</span></div>
<div class="c d" style="left:864px;top:593px;width:61px;height:17px;background:#ffffff"><span class="n">433.308</span></div>
<div class="c d" style="left:927px;top:593px;width:61px;height:17px;background:#ffffff"><span class="n">431.942</span></div>
<div class="c d" style="left:990px;top:593px;width:61px;height:17px;background:#ffffff"><span class="n">551.141</span></div>
<div class="c d" style="left:1053px;top:593px;width:61px;height:17px;background:#ffffff"><span class="n">549.387</span></div>
<div class="c d" style="left:1116px;top:593px;width:68px;height:17px;background:#ffffff"><span class="n">4.674.529</span></div>
<div class="c d" style="left:1186px;top:593px;width:68px;height:17px;background:#ffffff"><span class="n">4.661.455</span></div>
<div class="c d" style="left:1256px;top:593px;width:68px;height:17px;background:#ffffff"><span class="n" style="right:-1px">4.661.455</span></div>
<div class="c h" style="left:203px;top:612px;width:282px;height:17px;background:#dfe3ee"><b class="t">Volume Faturado de Esgoto (Total)</b></div>
<div class="c h" style="left:487px;top:612px;width:46px;height:17px;background:#dfe3ee"><i class="pl"></i><b class="t s">Todos</b></div>
<div class="c d" style="left:535px;top:612px;width:68px;height:17px;background:#f0f0f0"><span class="n">82.385.501</span></div>
<div class="c d" style="left:605px;top:612px;width:68px;height:17px;background:#f0f0f0"><span class="n">12.781.497</span></div>
<div class="c d" style="left:675px;top:612px;width:61px;height:17px;background:#f0f0f0"><span class="n">2.541.772</span></div>
<div class="c d" style="left:738px;top:612px;width:61px;height:17px;background:#f0f0f0"><span class="n">2.513.311</span></div>
<div class="c d" style="left:801px;top:612px;width:61px;height:17px;background:#f0f0f0"><span class="n">1.817.906</span></div>
<div class="c d" style="left:864px;top:612px;width:61px;height:17px;background:#f0f0f0"><span class="n">1.816.520</span></div>
<div class="c d" style="left:927px;top:612px;width:61px;height:17px;background:#f0f0f0"><span class="n">1.832.917</span></div>
<div class="c d" style="left:990px;top:612px;width:61px;height:17px;background:#f0f0f0"><span class="n">2.033.277</span></div>
<div class="c d" style="left:1053px;top:612px;width:61px;height:17px;background:#f0f0f0"><span class="n">1.999.829</span></div>
<div class="c d" style="left:1116px;top:612px;width:68px;height:17px;background:#f0f0f0"><span class="n">13.490.033</span></div>
<div class="c d" style="left:1186px;top:612px;width:68px;height:17px;background:#f0f0f0"><span class="n">13.471.806</span></div>
<div class="c d" style="left:1256px;top:612px;width:68px;height:17px;background:#f0f0f0"><span class="n" style="right:-1px">13.471.806</span></div>
<div id="slicer">Slicer:</div>
</div>
<div id="vsb">
 <div id="vup"></div>
 <div id="vthumb"></div>
 <div id="vdown"></div>
</div>
<div id="hsb">
 <div id="hthumb"></div>
</div>
<div id="corner"></div>
<svg style="position:absolute;left:0;top:0" width="1276" height="660">
 <polygon points="1268,8 1275,8 1271.5,4.5" fill="#5a5a5a"/>
 <polygon points="1268,636 1275,636 1271.5,639.5" fill="#5a5a5a"/>
 <g fill="#505050"><rect x="1267" y="334" width="6" height="1.6"/><rect x="1267" y="337" width="6" height="1.6"/><rect x="1267" y="340" width="6" height="1.6"/></g>
 <polygon points="9,651 9,658 5.5,654.5" fill="#4a4a4a"/>
 <polygon points="1252,651 1252,658 1255.5,654.5" fill="#4a4a4a"/>
 <g fill="#6a6a6a"><rect x="552" y="651" width="1.6" height="7"/><rect x="555.5" y="651" width="1.6" height="7"/><rect x="559" y="651" width="1.6" height="7"/></g>
</svg>
</body></html>
